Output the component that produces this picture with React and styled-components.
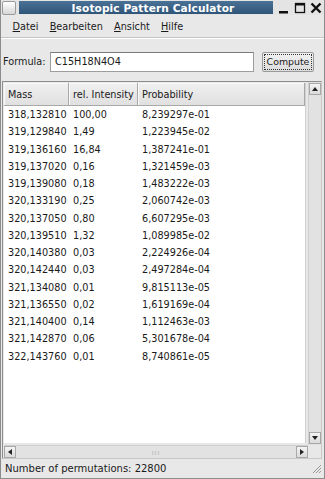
import React from "react";
import styled, { createGlobalStyle } from "styled-components";

const GlobalStyle = createGlobalStyle`
  html, body {
    margin: 0;
    padding: 0;
    background: #e6e6e6;
  }
  body {
    font-family: "DejaVu Sans", "Bitstream Vera Sans", sans-serif;
    font-size: 9.7px;
    color: #1a1a1a;
  }
`;

const Window = styled.div`
  width: 325px;
  height: 479px;
  box-sizing: border-box;
  display: flex;
  flex-direction: column;
  background: #e8e8e8;
  border-left: 1px solid #8c8c8c;
  border-right: 1px solid #8c8c8c;
  overflow: hidden;
`;

const TitleBar = styled.div`
  height: 15px;
  display: flex;
  align-items: center;
  gap: 3px;
  padding: 0 2px 0 1px;
  background: #e4e4e4;
  flex-shrink: 0;
`;

const WinIcon = styled.div`
  width: 12px;
  height: 12px;
  border: 1px solid #9a9a9a;
  border-radius: 2px;
  background: linear-gradient(#ffffff, #d6d6d6);
  flex-shrink: 0;
`;

const TitleStrip = styled.div`
  flex: 1;
  height: 13px;
  background: linear-gradient(#4a7196, #2f5679);
  color: #ffffff;
  font-weight: bold;
  font-size: 10.6px;
  display: flex;
  align-items: center;
  justify-content: center;
  padding-left: 14px;
  letter-spacing: 0.1px;
`;

const WinButtons = styled.div`
  display: flex;
  align-items: center;
  gap: 4px;
  margin-left: 2px;
`;

const WinBtn = styled.svg`
  width: 12px;
  height: 12px;
  display: block;
`;

const MenuBar = styled.div`
  height: 22px;
  display: flex;
  align-items: center;
  padding-left: 6px;
  border-bottom: 1px solid #c4c4c4;
  box-shadow: 0 1px 0 #ffffff;
  flex-shrink: 0;
`;

const MenuItem = styled.span`
  padding: 0 5.6px;
  u {
    text-decoration: underline;
    text-underline-offset: 1px;
  }
`;

const FormulaRow = styled.div`
  display: flex;
  align-items: center;
  padding: 13px 0 0 2px;
  height: 21px;
  flex-shrink: 0;
`;

const Label = styled.span`
  width: 47px;
`;

const Input = styled.div`
  width: 204px;
  height: 20px;
  box-sizing: border-box;
  border: 1px solid #9d9d9d;
  border-top-color: #7a7a7a;
  background: #ffffff;
  display: flex;
  align-items: center;
  padding-left: 4px;
`;

const Button = styled.div`
  margin-left: 8px;
  width: 52px;
  height: 20px;
  box-sizing: border-box;
  border: 1px solid #9a9a9a;
  border-radius: 2px;
  background: linear-gradient(#f2f2f2, #dcdcdc);
  display: flex;
  align-items: center;
  justify-content: center;
  padding: 1px;
  font-size: 9.4px;
`;

const FocusRing = styled.div`
  width: 100%;
  height: 100%;
  box-sizing: border-box;
  border: 1px dotted #333;
  display: flex;
  align-items: center;
  justify-content: center;
  white-space: nowrap;
`;

const TableFrame = styled.div`
  margin: 9px 2px 0 1px;
  flex: 1;
  min-height: 0;
  display: grid;
  grid-template-columns: 1fr 13px;
  grid-template-rows: 1fr 13px;
  border: 1px solid #8e8e8e;
  border-right-color: #c8c8c8;
  border-bottom-color: #c8c8c8;
  background: #e8e8e8;
`;

const ListArea = styled.div`
  background: #ffffff;
  overflow: hidden;
  margin: 1px 2px 2px 1px;
  border-right: 1px solid #d0d0d0;
`;

const HeaderRow = styled.div`
  display: grid;
  grid-template-columns: 65px 69px 1fr;
  height: 22px;
  background: linear-gradient(#f0f0f0, #e0e0e0);
  border-bottom: 1px solid #a8a8a8;
`;

const HeaderCell = styled.div`
  display: flex;
  align-items: center;
  padding-left: 4px;
  border-right: 1px solid #a8a8a8;
  box-shadow: inset 1px 1px 0 #fafafa;
`;

const DataRow = styled.div`
  display: grid;
  grid-template-columns: 65px 69px 1fr;
  height: 17.25px;
  align-items: center;
`;

const Cell = styled.div`
  padding-left: 4px;
  white-space: nowrap;
`;

const VScroll = styled.div`
  display: flex;
  flex-direction: column;
  justify-content: space-between;
  border-left: 1px solid #cfcfcf;
  background: #e2e2e2;
  padding: 1px 0;
`;

const HScroll = styled.div`
  display: flex;
  align-items: center;
  justify-content: space-between;
  background: #e2e2e2;
  border-top: 1px solid #cfcfcf;
  margin-left: 1px;
`;

const ArrowBtn = styled.div`
  width: 12px;
  height: 12px;
  box-sizing: border-box;
  border: 1px solid #a8a8a8;
  background: linear-gradient(#f4f4f4, #dadada);
  display: flex;
  align-items: center;
  justify-content: center;
`;

const Grip = styled.div`
  color: #a0a0a0;
  font-size: 6px;
  letter-spacing: 1px;
`;

const Corner = styled.div`
  background: #e8e8e8;
`;

const StatusBar = styled.div`
  height: 19px;
  display: flex;
  align-items: center;
  justify-content: space-between;
  padding: 0 2px 0 4px;
  flex-shrink: 0;
  font-size: 10px;
  border-bottom: 1px solid #8c8c8c;
`;

const Tri = ({ dir }) => {
  const pts = {
    up: "1,5 4,1 7,5",
    down: "1,1 4,5 7,1",
    left: "5,1 1,4 5,7",
    right: "1,1 5,4 1,7",
  }[dir];
  const w = dir === "up" || dir === "down" ? 8 : 6;
  const h = dir === "up" || dir === "down" ? 6 : 8;
  return (
    <svg width={w} height={h} viewBox={`0 0 ${w} ${h}`}>
      <polygon points={pts} fill="#222" />
    </svg>
  );
};

const rows = [
  ["318,132810", "100,00", "8,239297e-01"],
  ["319,129840", "1,49", "1,223945e-02"],
  ["319,136160", "16,84", "1,387241e-01"],
  ["319,137020", "0,16", "1,321459e-03"],
  ["319,139080", "0,18", "1,483222e-03"],
  ["320,133190", "0,25", "2,060742e-03"],
  ["320,137050", "0,80", "6,607295e-03"],
  ["320,139510", "1,32", "1,089985e-02"],
  ["320,140380", "0,03", "2,224926e-04"],
  ["320,142440", "0,03", "2,497284e-04"],
  ["321,134080", "0,01", "9,815113e-05"],
  ["321,136550", "0,02", "1,619169e-04"],
  ["321,140400", "0,14", "1,112463e-03"],
  ["321,142870", "0,06", "5,301678e-04"],
  ["322,143760", "0,01", "8,740861e-05"],
];

export default function App() {
  return (
    <>
      <GlobalStyle />
      <Window>
        <TitleBar>
          <WinIcon />
          <TitleStrip>Isotopic Pattern Calculator</TitleStrip>
          <WinButtons>
            <WinBtn viewBox="0 0 12 12">
              <rect x="1" y="9" width="9" height="2.5" fill="#111" />
            </WinBtn>
            <WinBtn viewBox="0 0 12 12">
              <rect x="1.5" y="1.5" width="9" height="9" fill="none" stroke="#111" strokeWidth="1.3" />
              <rect x="1.5" y="1.5" width="9" height="2" fill="#111" />
            </WinBtn>
            <WinBtn viewBox="0 0 12 12">
              <path d="M1.5 1.5 L10.5 10.5 M10.5 1.5 L1.5 10.5" stroke="#111" strokeWidth="2.4" />
            </WinBtn>
          </WinButtons>
        </TitleBar>
        <MenuBar>
          <MenuItem><u>D</u>atei</MenuItem>
          <MenuItem><u>B</u>earbeiten</MenuItem>
          <MenuItem><u>A</u>nsicht</MenuItem>
          <MenuItem><u>H</u>ilfe</MenuItem>
        </MenuBar>
        <FormulaRow>
          <Label>Formula:</Label>
          <Input>C15H18N4O4</Input>
          <Button>
            <FocusRing>Compute</FocusRing>
          </Button>
        </FormulaRow>
        <TableFrame>
          <ListArea>
            <HeaderRow>
              <HeaderCell>Mass</HeaderCell>
              <HeaderCell>rel. Intensity</HeaderCell>
              <HeaderCell>Probability</HeaderCell>
            </HeaderRow>
            <div>
              {rows.map((r) => (
                <DataRow key={r[0]}>
                  <Cell>{r[0]}</Cell>
                  <Cell>{r[1]}</Cell>
                  <Cell>{r[2]}</Cell>
                </DataRow>
              ))}
            </div>
          </ListArea>
          <VScroll>
            <ArrowBtn><Tri dir="up" /></ArrowBtn>
            <ArrowBtn><Tri dir="down" /></ArrowBtn>
          </VScroll>
          <HScroll>
            <ArrowBtn><Tri dir="left" /></ArrowBtn>
            <Grip>⁞⁞⁞</Grip>
            <ArrowBtn><Tri dir="right" /></ArrowBtn>
          </HScroll>
          <Corner />
        </TableFrame>
        <StatusBar>
          <span>Number of permutations: 22800</span>
          <svg width="11" height="11" viewBox="0 0 11 11">
            <path d="M10 2 L2 10 M10 5 L5 10 M10 8 L8 10" stroke="#9a9a9a" strokeWidth="1" />
          </svg>
        </StatusBar>
      </Window>
    </>
  );
}
